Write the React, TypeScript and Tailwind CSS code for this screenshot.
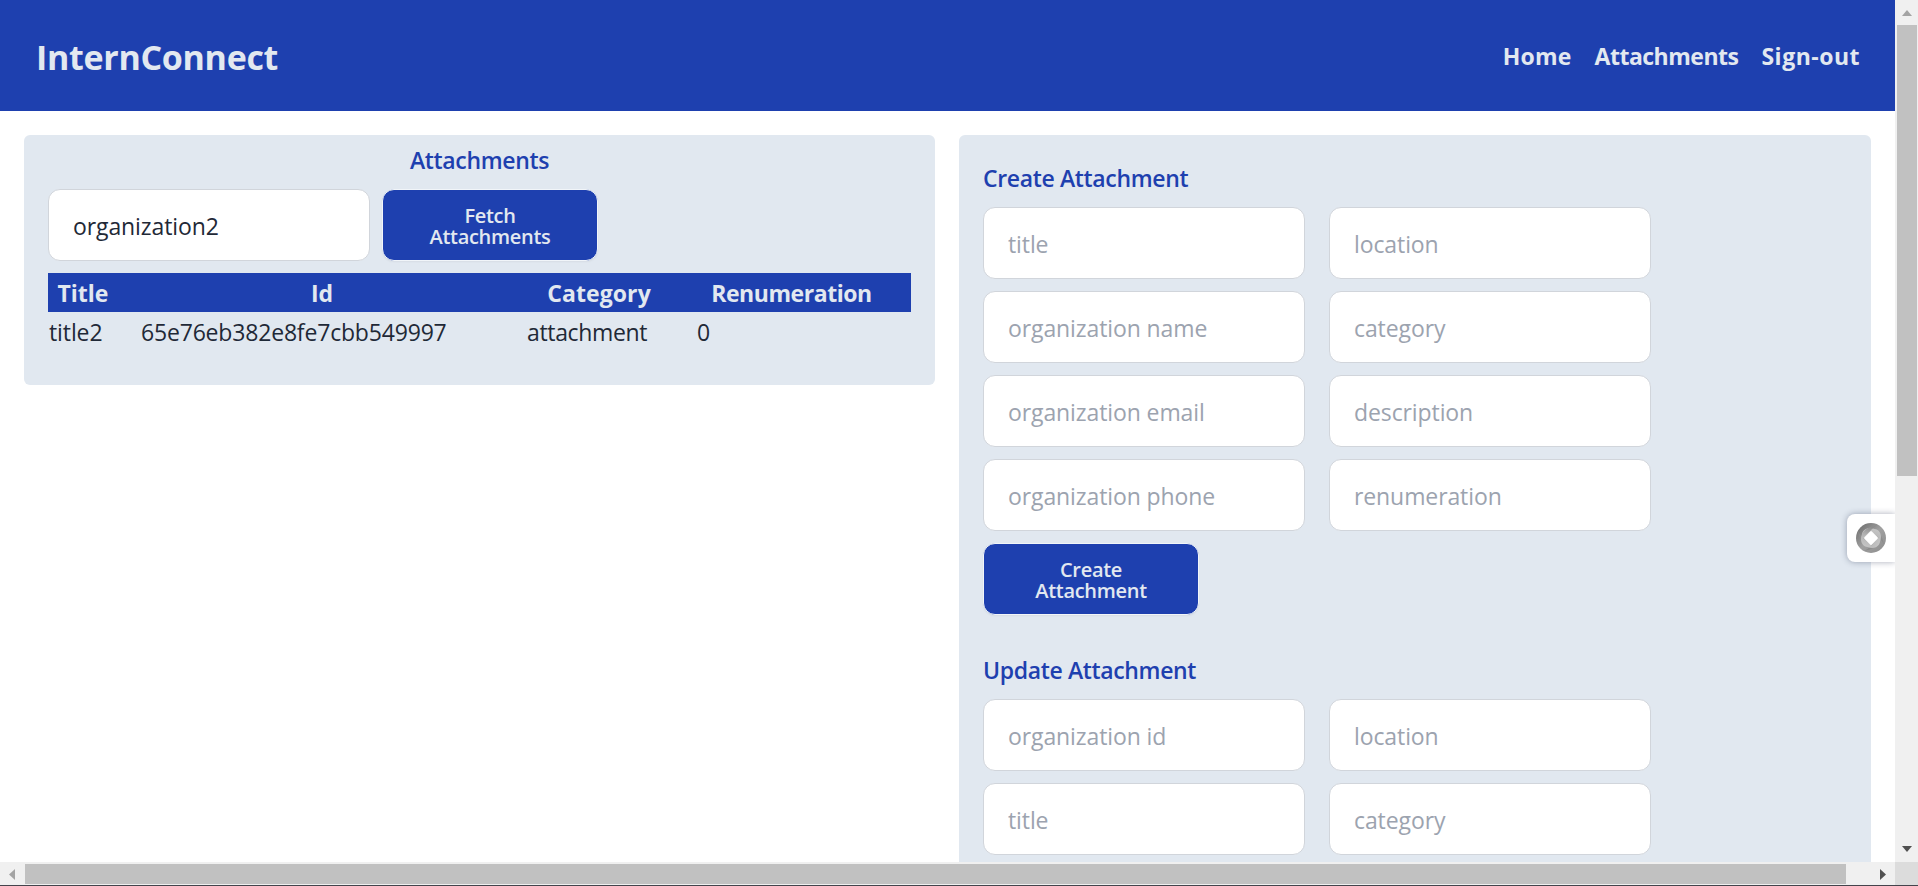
const createFields = [
  "title",
  "location",
  "organization name",
  "category",
  "organization email",
  "description",
  "organization phone",
  "renumeration",
];

const updateFields = ["organization id", "location", "title", "category"];

const inputClass =
  "h-[72px] w-[322px] rounded-xl border border-[#d1d5db] bg-white px-6 pt-[2px] text-[23px] tracking-[-0.1px] text-[#1f2937] outline-none placeholder:text-[#9ca3af]";

function Field({ placeholder, value }: { placeholder?: string; value?: string }) {
  return <input className={inputClass} placeholder={placeholder} defaultValue={value} />;
}

function ActionButton({ first, second }: { first: string; second: string }) {
  return (
    <button className="h-[72px] w-[216px] rounded-xl border border-slate-100 bg-[#1e40af] pt-[2px] text-[20px] leading-[21px] font-semibold tracking-[-0.3px] text-slate-200 shadow-[0_1px_2px_rgba(0,0,0,0.05)]">
      {first}
      <br />
      {second}
    </button>
  );
}

function Heading({ children, className = "" }: { children: string; className?: string }) {
  return (
    <h2
      className={`h-9 pt-px text-[23px] leading-9 font-semibold tracking-[-0.35px] text-[#1e40af] ${className}`}
    >
      {children}
    </h2>
  );
}

function FieldGrid({ fields }: { fields: string[] }) {
  return (
    <div className="mt-3 grid grid-cols-[322px_322px] gap-x-6 gap-y-3">
      {fields.map((name) => (
        <Field key={name} placeholder={name} />
      ))}
    </div>
  );
}

function Header() {
  return (
    <header className="flex h-[111px] items-center justify-between bg-[#1e40af] pr-[35px] pl-9 font-bold text-slate-200">
      <h1 className="pt-1 text-[34px] tracking-[-0.3px]">InternConnect</h1>
      <nav className="flex gap-[23px] pt-[2px] text-[23px]">
        <a className="tracking-[0.2px]">Home</a>
        <a className="tracking-[-0.5px]">Attachments</a>
        <a className="tracking-[0.5px]">Sign-out</a>
      </nav>
    </header>
  );
}

function AttachmentsPanel() {
  return (
    <section className="h-[250px] w-[911px] rounded-md bg-[#e1e8f0] px-6 pt-[6px]">
      <Heading className="text-center">Attachments</Heading>
      <div className="mt-3 flex gap-3">
        <Field value="organization2" />
        <ActionButton first="Fetch" second="Attachments" />
      </div>
      <table className="mt-3 w-[863px] table-fixed border-collapse text-[23px] text-[#1f2937]">
        <colgroup>
          <col className="w-[70px]" />
          <col className="w-[408px]" />
          <col className="w-[146px]" />
          <col className="w-[239px]" />
        </colgroup>
        <thead>
          <tr className="h-[39px] bg-[#1e40af] leading-9 text-slate-200">
            <th className="p-0">Title</th>
            <th className="p-0">Id</th>
            <th className="p-0 tracking-[0.1px]">Category</th>
            <th className="p-0 tracking-[-0.45px]">Renumeration</th>
          </tr>
        </thead>
        <tbody>
          <tr className="h-[39px] leading-9">
            <td className="p-0 pl-px tracking-[-0.1px]">title2</td>
            <td className="p-0 pl-[23px] tracking-[-0.18px]">65e76eb382e8fe7cbb549997</td>
            <td className="p-0 pl-px tracking-[-0.35px]">attachment</td>
            <td className="p-0 pl-[25px]">0</td>
          </tr>
        </tbody>
      </table>
    </section>
  );
}

function FormsPanel() {
  return (
    <section className="h-[1100px] w-[912px] rounded-md bg-[#e1e8f0] p-6">
      <Heading>Create Attachment</Heading>
      <FieldGrid fields={createFields} />
      <div className="mt-3 mb-9 flex">
        <ActionButton first="Create" second="Attachment" />
      </div>
      <Heading>Update Attachment</Heading>
      <FieldGrid fields={updateFields} />
    </section>
  );
}

function SideWidget() {
  return (
    <div className="absolute top-[514px] right-0 flex h-12 w-12 items-center justify-center rounded-l-lg bg-white shadow-[0_0_6px_rgba(40,50,80,0.4)]">
      <svg width="30" height="30" viewBox="-15 -15 30 30">
        <defs>
          <linearGradient id="rim" x1="0" y1="0" x2="1" y2="1">
            <stop offset="0" stopColor="#666" />
            <stop offset="0.5" stopColor="#a0a0a0" />
            <stop offset="1" stopColor="#8c8c8c" />
          </linearGradient>
          <linearGradient id="blade" x1="0" y1="0" x2="1" y2="0.3">
            <stop offset="0" stopColor="#c8c8c8" />
            <stop offset="0.55" stopColor="#b4b4b4" />
            <stop offset="1" stopColor="#8c8c8c" />
          </linearGradient>
        </defs>
        <circle r="15" fill="url(#rim)" />
        {[0, 90, 180, 270].map((angle) => (
          <path
            key={angle}
            transform={`rotate(${angle})`}
            d="M-8 1C-11 -5 -7 -10 -1 -10C6 -10 11 -5 13 7C11 3 9 1 7 -1L0 -8Z"
            fill="url(#blade)"
          />
        ))}
        <rect x="-5.2" y="-5.2" width="10.4" height="10.4" rx="1" transform="rotate(45)" fill="#fff" />
      </svg>
    </div>
  );
}

function VerticalScrollbar() {
  return (
    <div className="flex h-[862px] flex-col items-center bg-[#f0f0f0]">
      <svg className="h-[25px] w-[23px] shrink-0" viewBox="0 0 23 25">
        <path d="M7 16L12 10L17 16Z" fill="#a3a3a3" />
      </svg>
      <div className="ml-px h-[451px] w-5 bg-[#c1c1c1]" />
      <svg className="mt-auto h-[25px] w-[23px] shrink-0" viewBox="0 0 23 25">
        <path d="M7 9H17L12 15Z" fill="#505050" />
      </svg>
    </div>
  );
}

function HorizontalScrollbar() {
  return (
    <div className="flex h-[23px] items-start bg-[#f0f0f0]">
      <svg className="h-[23px] w-[25px] shrink-0" viewBox="0 0 25 23">
        <path d="M15 7V18L9 12.5Z" fill="#a3a3a3" />
      </svg>
      <div className="mt-[2px] h-5 w-[1821px] bg-[#c1c1c1]" />
      <svg className="ml-auto h-[23px] w-[25px] shrink-0" viewBox="0 0 25 23">
        <path d="M10 7V18L16 12.5Z" fill="#505050" />
      </svg>
    </div>
  );
}

export default function App() {
  return (
    <div className="grid h-[886px] w-[1918px] grid-cols-[1895px_23px] grid-rows-[862px_23px_1px] overflow-hidden bg-white font-['Open_Sans','Noto_Sans',sans-serif]">
      <div className="relative h-[862px] overflow-hidden">
        <Header />
        <main className="flex items-start gap-6 p-6">
          <AttachmentsPanel />
          <FormsPanel />
        </main>
        <SideWidget />
      </div>
      <VerticalScrollbar />
      <HorizontalScrollbar />
      <div className="bg-[#dcdcdc]" />
      <div className="col-span-2 bg-[#44444c]" />
    </div>
  );
}
